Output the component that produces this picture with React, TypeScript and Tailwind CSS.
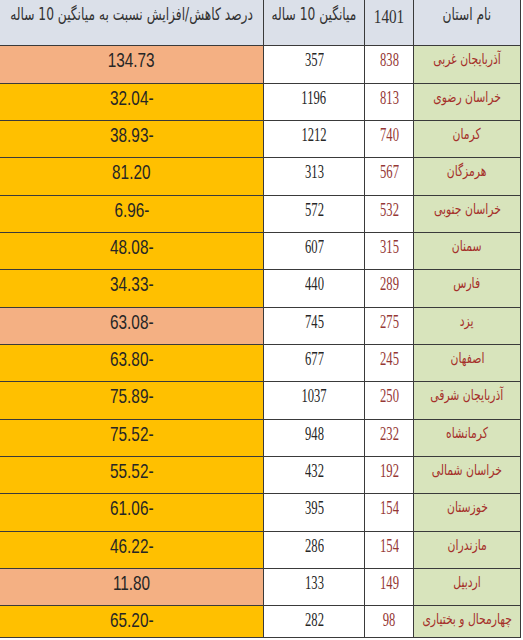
import React from "react";

type Row = { name: string; y1401: string; avg: string; pct: string; tone: "s" | "g" };

const rows: Row[] = [
  { name: "آذربایجان غربی", y1401: "838", avg: "357", pct: "134.73", tone: "s" },
  { name: "خراسان رضوی", y1401: "813", avg: "1196", pct: "32.04-", tone: "g" },
  { name: "کرمان", y1401: "740", avg: "1212", pct: "38.93-", tone: "g" },
  { name: "هرمزگان", y1401: "567", avg: "313", pct: "81.20", tone: "g" },
  { name: "خراسان جنوبی", y1401: "532", avg: "572", pct: "6.96-", tone: "g" },
  { name: "سمنان", y1401: "315", avg: "607", pct: "48.08-", tone: "g" },
  { name: "فارس", y1401: "289", avg: "440", pct: "34.33-", tone: "g" },
  { name: "یزد", y1401: "275", avg: "745", pct: "63.08-", tone: "s" },
  { name: "اصفهان", y1401: "245", avg: "677", pct: "63.80-", tone: "g" },
  { name: "آذربایجان شرقی", y1401: "250", avg: "1037", pct: "75.89-", tone: "g" },
  { name: "کرمانشاه", y1401: "232", avg: "948", pct: "75.52-", tone: "g" },
  { name: "خراسان شمالی", y1401: "192", avg: "432", pct: "55.52-", tone: "g" },
  { name: "خوزستان", y1401: "154", avg: "395", pct: "61.06-", tone: "g" },
  { name: "مازندران", y1401: "154", avg: "286", pct: "46.22-", tone: "g" },
  { name: "اردبیل", y1401: "149", avg: "133", pct: "11.80", tone: "s" },
  { name: "چهارمحال و بختیاری", y1401: "98", avg: "282", pct: "65.20-", tone: "g" },
];

const heights = ["h-[38px]", "h-[37px]", "h-[37px]"];

export default function App() {
  return (
    <div className="w-[523px] h-[640px] bg-white">
      <div className="w-[521px]">
        {/* header */}
        <div className="flex h-[46px] bg-[#dbe0e9] border-b border-[#3a3a3a] text-[#333]">
          <div className="w-[263px] flex justify-center pt-[2px]">
            <span
              dir="rtl"
              className="inline-block scale-x-[0.72] whitespace-nowrap text-[17px] [font-family:'DejaVu_Sans',sans-serif]"
            >
              درصد کاهش/افزایش نسبت به میانگین 10 ساله
            </span>
          </div>
          <div className="w-[101px] border-l border-[#3a3a3a] flex justify-center pt-[2px]">
            <span
              dir="rtl"
              className="inline-block scale-x-[0.72] whitespace-nowrap text-[17px] [font-family:'DejaVu_Sans',sans-serif]"
            >
              میانگین 10 ساله
            </span>
          </div>
          <div className="w-[49px] border-l border-[#3a3a3a] flex justify-center pt-[3px]">
            <span className="inline-block scale-x-[0.8] text-[19px] [font-family:'Liberation_Serif',serif]">
              1401
            </span>
          </div>
          <div className="w-[108px] border-l border-r border-[#3a3a3a] flex justify-center pt-[2px]">
            <span
              dir="rtl"
              className="inline-block scale-x-[0.72] whitespace-nowrap text-[17px] [font-family:'DejaVu_Sans',sans-serif]"
            >
              نام استان
            </span>
          </div>
        </div>
        {rows.map((r, i) => {
          const h = i === rows.length - 1 ? "h-[32px]" : heights[i % 3];
          const bg = r.tone === "s" ? "bg-[#f4b083]" : "bg-[#ffc000]";
          return (
            <div key={i} className={`flex ${h} border-b border-[#3a3a3a]`}>
              <div className={`w-[263px] ${bg} flex justify-center pt-[1px]`}>
                <span className="inline-block scale-x-[0.73] text-[21px] leading-[26px] text-[#262626] [font-family:'Liberation_Sans',sans-serif]">
                  {r.pct}
                </span>
              </div>
              <div className="w-[101px] bg-white border-l border-[#3a3a3a] flex justify-center pt-[1px]">
                <span className="inline-block scale-x-[0.7] text-[18px] leading-[26px] text-[#262626] [font-family:'Liberation_Serif',serif]">
                  {r.avg}
                </span>
              </div>
              <div className="w-[49px] bg-white border-l border-[#3a3a3a] flex justify-center pt-[1px]">
                <span className="inline-block scale-x-[0.7] text-[18px] leading-[26px] text-[#953735] [font-family:'Liberation_Serif',serif]">
                  {r.y1401}
                </span>
              </div>
              <div className="w-[108px] bg-[#d8e4bc] border-l border-r border-[#3a3a3a] flex justify-center pt-[3px]">
                <span
                  dir="rtl"
                  className="inline-block scale-x-[0.72] whitespace-nowrap text-[15px] leading-[20px] text-[#a5302a] [font-family:'DejaVu_Sans',sans-serif]"
                >
                  {r.name}
                </span>
              </div>
            </div>
          );
        })}
      </div>
    </div>
  );
}
